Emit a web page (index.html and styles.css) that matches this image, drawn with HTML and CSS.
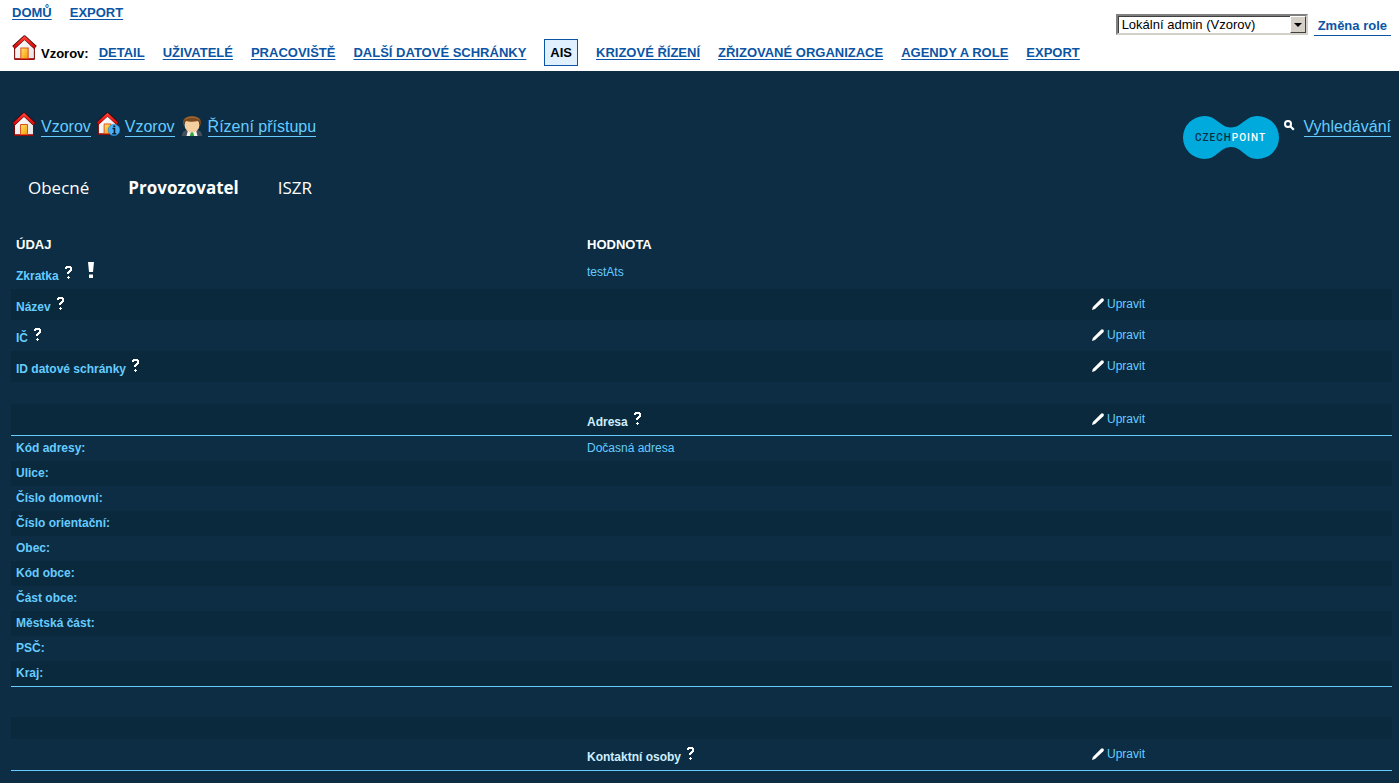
FILE: index.html
```html
<!DOCTYPE html>
<html lang="cs">
<head>
<meta charset="utf-8">
<title>Vzorov – AIS – Provozovatel</title>
<link rel="stylesheet" href="styles.css">
</head>
<body>
<svg class="sprite" aria-hidden="true">
  <defs>
    <linearGradient id="wall" x1="0" y1="0" x2="1" y2="1"><stop offset="0" stop-color="#fff"/><stop offset="1" stop-color="#e4e4e4"/></linearGradient>
    <linearGradient id="door" x1="0" y1="0" x2="1" y2="1"><stop offset="0" stop-color="#ffe56b"/><stop offset="1" stop-color="#f79a08"/></linearGradient>
    <linearGradient id="roof" x1="0" y1="0" x2="0" y2="1"><stop offset="0" stop-color="#ff3a30"/><stop offset="1" stop-color="#d80808"/></linearGradient>
  </defs>
  <symbol id="house" viewBox="0 0 24 24">
    <path d="M2.500 12L12 3l9.500 9v11h-19z" fill="url(#wall)" stroke="#7d0505"/>
    <path d="M2.500 23.200h19" stroke="#a00808" stroke-width="1.500"/>
    <path d="M8.500 22.500v-10h7v10z" fill="url(#door)" stroke="#e0501a" stroke-width="1"/>
    <path d="M1.500 12L12 2.300 22.500 12" fill="none" stroke="#3c0505" stroke-width="3.800" stroke-linejoin="round"/>
    <path d="M1.800 12L12 2.600 22.200 12" fill="none" stroke="url(#roof)" stroke-width="2.600"/>
  </symbol>
  <symbol id="house-info" viewBox="0 0 24 24">
    <use href="#house" width="23" height="23"/>
    <circle cx="18" cy="18" r="5.800" fill="#4aaef5" stroke="#1c7dc8" stroke-width=".6"/>
    <path d="M16.500 16.500h2v5M16.300 21.700h4M17.300 14.200h2" fill="none" stroke="#0a1b2b" stroke-width="1.600"/>
  </symbol>
  <symbol id="person" viewBox="0 0 20 20">
    <path d="M0 20c0-4 2.500-6 6-6h8c3.500 0 6 2 6 6z" fill="#47505a"/>
    <path d="M6 14l4 3 4-3 1.500 6h-11z" fill="#f4f4f4"/>
    <path d="M9 16h2l1.200 4H7.800z" fill="#39a43c"/>
    <ellipse cx="10" cy="9" rx="7.500" ry="7.500" fill="#f6cfa1"/>
    <path d="M2 10C-1 4 3 0 10 0s11 4 8 10c0-3-1-4-2-5-4 1-9 1-12 0-1 1-2 2-2 5z" fill="#7a4a20"/>
    <path d="M3 3.500c3-3 11-3 14 0" stroke="#a5703c" fill="none"/>
  </symbol>
  <symbol id="question" viewBox="0 0 7 13">
    <path d="M0 1h1V0h5v1h1v4H6v1H5v1H4v1H2V6h1V5h1V4h1V2H2v1H0zM2 11h1v-1h1v1h1v1H4v1H3v-1H2z" fill="#fff"/>
  </symbol>
  <symbol id="exclaim" viewBox="0 0 6 16">
    <path d="M0 0h6L5 10H1zM1 12.500h4V16H1z" fill="#fff"/>
  </symbol>
  <symbol id="pencil" viewBox="0 0 12 12">
    <path d="M0 12l.8-3L8.800.9Q10-.3 11.300.8q1.200 1.200 0 2.400L3 11z" fill="#fff"/>
  </symbol>
  <symbol id="lens" viewBox="0 0 11 11">
    <circle cx="4" cy="4" r="3" fill="none" stroke="#fff" stroke-width="2"/>
    <path d="M6.300 6.300l3.500 3.500" stroke="#fff" stroke-width="2.200"/>
  </symbol>
</svg>

<header class="topbar">
  <div class="menus">
    <nav class="menu" aria-label="Hlavní menu">
      <a href="#">DOMŮ</a>
      <a href="#">EXPORT</a>
    </nav>
    <nav class="menu menu-sub" aria-label="Menu subjektu">
      <span class="subject"><svg class="home"><use href="#house"/></svg><span class="subject-name">Vzorov:</span></span>
      <a href="#">DETAIL</a>
      <a href="#">UŽIVATELÉ</a>
      <a href="#">PRACOVIŠTĚ</a>
      <a href="#">DALŠÍ DATOVÉ SCHRÁNKY</a>
      <a href="#" class="current" aria-current="page">AIS</a>
      <a href="#">KRIZOVÉ ŘÍZENÍ</a>
      <a href="#">ZŘIZOVANÉ ORGANIZACE</a>
      <a href="#">AGENDY A ROLE</a>
      <a href="#">EXPORT</a>
    </nav>
  </div>
  <form class="role">
    <span class="select-box">
      <select aria-label="Role"><option>Lokální admin (Vzorov)</option></select>
      <span class="select-arrow" aria-hidden="true"></span>
    </span>
    <a href="#" class="role-link">Změna role</a>
  </form>
</header>

<main class="content">
  <div class="path-row">
    <nav class="path" aria-label="Cesta">
      <a href="#"><svg class="path-icon"><use href="#house"/></svg><span>Vzorov</span></a>
      <a href="#"><svg class="path-icon"><use href="#house-info"/></svg><span>Vzorov</span></a>
      <a href="#"><svg class="person-icon"><use href="#person"/></svg><span>Řízení přístupu</span></a>
    </nav>
    <div class="tools">
      <svg class="logo" viewBox="0 0 96 43" role="img" aria-label="CzechPoint">
        <path d="M21.500 0C34 0 37 11.500 48 11.500S62 0 74.500 0a21.500 21.500 0 0 1 0 43C62 43 59 31 48 31S34 43 21.500 43a21.500 21.500 0 0 1 0-43z" fill="#00aadc"/>
        <text x="12" y="25" class="logo-text"><tspan fill="#0c2d44">CZECH</tspan><tspan fill="#fff">POINT</tspan></text>
      </svg>
      <a href="#" class="search"><svg class="lens"><use href="#lens"/></svg><span>Vyhledávání</span></a>
    </div>
  </div>

  <nav class="tabs" aria-label="Záložky">
    <a href="#">Obecné</a>
    <a href="#" class="active" aria-current="page">Provozovatel</a>
    <a href="#">ISZR</a>
  </nav>

  <table class="data">
    <colgroup><col class="col-name"><col class="col-value"><col></colgroup>
    <thead>
      <tr><th scope="col">ÚDAJ</th><th scope="col">HODNOTA</th><td></td></tr>
    </thead>
    <tbody class="fields">
      <tr><th scope="row">Zkratka <svg class="hint"><use href="#question"/></svg><svg class="warn"><use href="#exclaim"/></svg></th><td>testAts</td><td></td></tr>
      <tr class="dark"><th scope="row">Název <svg class="hint"><use href="#question"/></svg></th><td></td><td><a href="#" class="edit"><svg class="pencil"><use href="#pencil"/></svg>Upravit</a></td></tr>
      <tr><th scope="row">IČ <svg class="hint"><use href="#question"/></svg></th><td></td><td><a href="#" class="edit"><svg class="pencil"><use href="#pencil"/></svg>Upravit</a></td></tr>
      <tr class="dark"><th scope="row">ID datové schránky <svg class="hint"><use href="#question"/></svg></th><td></td><td><a href="#" class="edit"><svg class="pencil"><use href="#pencil"/></svg>Upravit</a></td></tr>
    </tbody>
    <tbody class="fields">
      <tr class="spacer"><td colspan="3"></td></tr>
      <tr class="dark section"><td></td><th scope="rowgroup">Adresa <svg class="hint"><use href="#question"/></svg></th><td><a href="#" class="edit"><svg class="pencil"><use href="#pencil"/></svg>Upravit</a></td></tr>
    </tbody>
    <tbody class="address">
      <tr><th scope="row">Kód adresy:</th><td>Dočasná adresa</td><td></td></tr>
      <tr class="dark"><th scope="row">Ulice:</th><td></td><td></td></tr>
      <tr><th scope="row">Číslo domovní:</th><td></td><td></td></tr>
      <tr class="dark"><th scope="row">Číslo orientační:</th><td></td><td></td></tr>
      <tr><th scope="row">Obec:</th><td></td><td></td></tr>
      <tr class="dark"><th scope="row">Kód obce:</th><td></td><td></td></tr>
      <tr><th scope="row">Část obce:</th><td></td><td></td></tr>
      <tr class="dark"><th scope="row">Městská část:</th><td></td><td></td></tr>
      <tr><th scope="row">PSČ:</th><td></td><td></td></tr>
      <tr class="dark last"><th scope="row">Kraj:</th><td></td><td></td></tr>
    </tbody>
    <tbody class="fields">
      <tr class="gap"><td colspan="3"></td></tr>
      <tr class="dark spacer"><td colspan="3"></td></tr>
      <tr class="section"><td></td><th scope="rowgroup">Kontaktní osoby <svg class="hint"><use href="#question"/></svg></th><td><a href="#" class="edit"><svg class="pencil"><use href="#pencil"/></svg>Upravit</a></td></tr>
    </tbody>
  </table>
</main>
</body>
</html>
```

FILE: styles.css
```css
* { box-sizing: border-box; }

body {
  margin: 0;
  background: #0c2d44;
  color: #6cf;
  font: 12px/15px "Liberation Sans", Arial, sans-serif;
}

.sprite { position: absolute; width: 0; height: 0; }

/* Top bar */
.topbar {
  display: flex;
  justify-content: space-between;
  align-items: flex-start;
  padding: 4px 8px 3px 12px;
  background: #fff;
  color: #000;
}

.menu {
  display: flex;
  align-items: center;
  gap: 18px;
  height: 16px;
  font-size: 13px;
  font-weight: bold;
  white-space: nowrap;
}

.menu a { color: #0b55a5; text-underline-offset: 2px; }
.menu-sub { height: 32px; margin-top: 16px; }
.subject { display: flex; align-items: center; gap: 4px; margin-right: -8px; }
.subject-name { padding-top: 3px; }
.home { width: 25px; height: 25px; margin-bottom: 9px; }

.menu .current {
  padding: 5px;
  border: 1px solid #0b55a5;
  background: #e1f0ff;
  color: #000;
  text-decoration: none;
}

.role { display: flex; align-items: flex-start; gap: 6px; padding-top: 10px; }
.select-box { position: relative; display: block; }

.select-box select {
  display: block;
  width: 192px;
  height: 21px;
  padding: 0 20px 0 4px;
  appearance: none;
  border: 2px solid;
  border-color: #808080 #d4d0c8 #d4d0c8 #808080;
  border-radius: 0;
  box-shadow: inset 1px 1px 0 #404040;
  background: #fff;
  color: #000;
  font: 13px "Liberation Sans", Arial, sans-serif;
}

.select-arrow {
  position: absolute;
  top: 2px;
  right: 2px;
  width: 16px;
  height: 17px;
  border: 1px solid;
  border-color: #fff #404040 #404040 #fff;
  background: #d4d0c8;
  pointer-events: none;
}

.select-arrow::after {
  content: "";
  position: absolute;
  top: 6px;
  left: 3px;
  border: 4px solid transparent;
  border-top-color: #000;
  border-bottom: 0;
}

.role-link {
  padding: 4px 4px 2px;
  border-bottom: 1px solid #0b55a5;
  color: #0b55a5;
  font-size: 13px;
  font-weight: bold;
  text-decoration: none;
}

/* Page content */
.content { padding: 41px 7px 0 11px; }
.content a { color: #6cf; text-decoration: none; }

.path-row {
  display: flex;
  justify-content: space-between;
  align-items: flex-start;
  font-size: 16px;
  line-height: 18px;
}

.path { display: flex; gap: 5px; }
.path a, .search { display: flex; align-items: flex-start; gap: 5px; }
.path span, .search span { margin-top: 6px; border-bottom: 1px solid #6cf; }
.path-icon { width: 24px; height: 24px; }
.path a:first-child { padding-left: 1px; }
.person-icon { width: 20px; height: 20px; margin: 4px 1px 0 2px; }
.tools { display: flex; gap: 5px; padding-right: 1px; }
.logo { width: 96px; height: 43px; margin-top: 4px; }
.logo-text { font: 500 10px Roboto, sans-serif; letter-spacing: 1px; }
.search { gap: 9px; }
.lens { width: 11px; height: 11px; margin-top: 8px; }

.tabs {
  display: flex;
  gap: 39px;
  padding: 17px;
  font: 17px/24px "Open Sans", "Noto Sans", sans-serif;
}

.content .tabs a { color: #fff; }
.tabs .active { font-weight: bold; }

/* Data table */
.data {
  width: 100%;
  margin-top: 15px;
  table-layout: fixed;
  border-collapse: separate;
  border-spacing: 0;
}

.col-name { width: 571px; }
.col-value { width: 505px; }

.data th, .data td { padding: 5px; text-align: left; vertical-align: top; }

.data thead th {
  height: 26px;
  color: #fff;
  font-size: 13px;
}

.dark { background: #0b293d; }
.fields tr { height: 31px; }
.fields td { padding-top: 7px; }
.fields th { padding-top: 8px; line-height: 20px; padding-bottom: 0; }
.data .spacer td, .data .gap td { padding: 0; }
.fields .spacer { height: 22px; }
.fields .gap { height: 30px; }
.fields .section { height: 32px; }
.section th { color: #cef; }
.section th, .section td, .last th, .last td { border-bottom: 1px solid #6cf; }
.address tr { height: 25px; }
.address .last { height: 26px; }

.hint { width: 7px; height: 13px; margin-left: 3px; vertical-align: 1px; }
.warn { width: 8px; height: 16px; margin: -4px 0 0 15px; vertical-align: 2px; }
.edit { display: flex; align-items: center; gap: 3px; padding-top: 1px; }
.pencil { width: 12px; height: 12px; margin-bottom: 1px; }
```
